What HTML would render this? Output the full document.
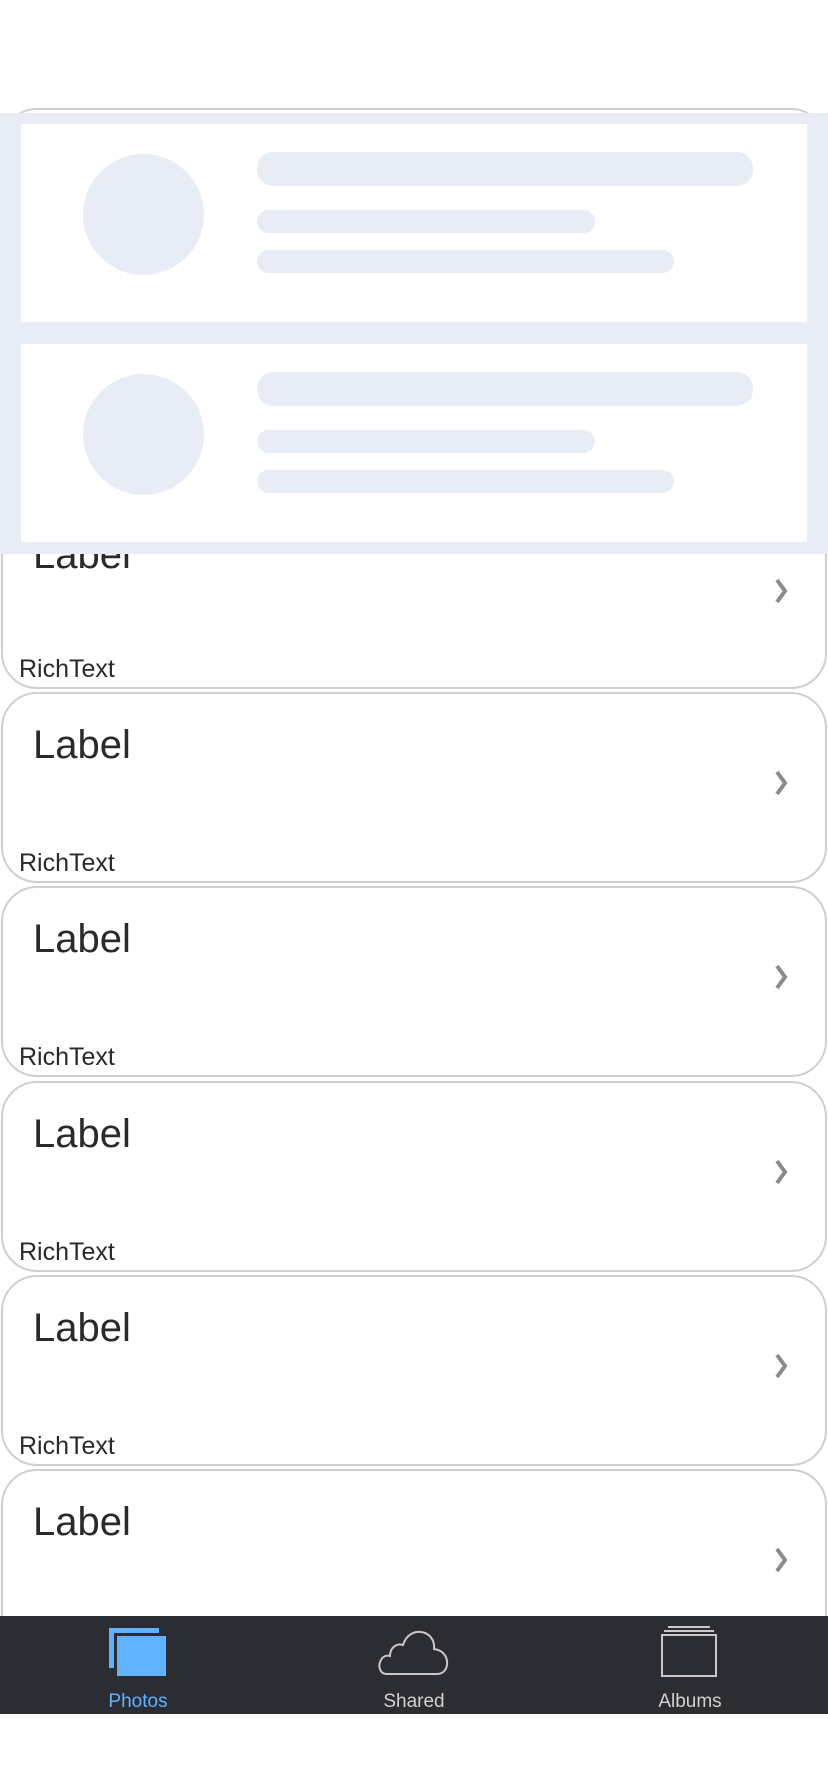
<!DOCTYPE html>
<html><head><meta charset="utf-8"><style>
*{margin:0;padding:0;box-sizing:border-box}
body{width:828px;height:1792px;background:#fff;position:relative;overflow:hidden;font-family:"Liberation Sans",sans-serif}
.card{position:absolute;left:1px;width:826px;border:2px solid #cfcfcf;border-radius:36px;background:#fff;overflow:hidden}
.lab{position:absolute;left:30px;font-size:40px;color:#2a2a2a;line-height:1}
.rt{position:absolute;left:16px;font-size:25px;color:#2a2a2a;line-height:1}
.chev{position:absolute;left:768px;width:20px;height:26px}
.ov{position:absolute;left:0;top:113px;width:828px;height:441px;background:#e8edf5}
.pn{position:absolute;left:21px;width:786px;height:198px;background:#fff}
.c{position:absolute;left:62px;top:30px;width:121px;height:121px;border-radius:50%;background:#e8edf5}
.b{position:absolute;left:236px;background:#e8edf5;border-radius:16px}
.tab{position:absolute;left:0;top:1616px;width:828px;height:98px;background:#2b2d33}
.tl{position:absolute;top:75px;font-size:19px;width:160px;text-align:center}
</style></head><body>

<div class="card" style="top:108px;height:581px">
 <div class="lab" style="top:425px">Label</div>
 <div class="chev" style="top:468px"><svg width="20" height="26"><path d="M6 2 L14 13 L6 24" stroke="#8a8a8a" stroke-width="4" fill="none"/></svg></div>
 <div class="rt" style="top:547px">RichText</div>
</div>
<div class="card" style="top:692px;height:191px">
 <div class="lab" style="top:31px">Label</div>
 <div class="chev" style="top:76px"><svg width="20" height="26"><path d="M6 2 L14 13 L6 24" stroke="#8a8a8a" stroke-width="4" fill="none"/></svg></div>
 <div class="rt" style="top:157px">RichText</div>
</div>
<div class="card" style="top:886px;height:191px">
 <div class="lab" style="top:31px">Label</div>
 <div class="chev" style="top:76px"><svg width="20" height="26"><path d="M6 2 L14 13 L6 24" stroke="#8a8a8a" stroke-width="4" fill="none"/></svg></div>
 <div class="rt" style="top:157px">RichText</div>
</div>
<div class="card" style="top:1081px;height:191px">
 <div class="lab" style="top:31px">Label</div>
 <div class="chev" style="top:76px"><svg width="20" height="26"><path d="M6 2 L14 13 L6 24" stroke="#8a8a8a" stroke-width="4" fill="none"/></svg></div>
 <div class="rt" style="top:157px">RichText</div>
</div>
<div class="card" style="top:1275px;height:191px">
 <div class="lab" style="top:31px">Label</div>
 <div class="chev" style="top:76px"><svg width="20" height="26"><path d="M6 2 L14 13 L6 24" stroke="#8a8a8a" stroke-width="4" fill="none"/></svg></div>
 <div class="rt" style="top:157px">RichText</div>
</div>
<div class="card" style="top:1469px;height:191px">
 <div class="lab" style="top:31px">Label</div>
 <div class="chev" style="top:76px"><svg width="20" height="26"><path d="M6 2 L14 13 L6 24" stroke="#8a8a8a" stroke-width="4" fill="none"/></svg></div>
</div>

<div class="ov">
 <div class="pn" style="top:11px">
  <div class="c"></div>
  <div class="b" style="top:28px;width:496px;height:34px"></div>
  <div class="b" style="top:86px;width:338px;height:23px"></div>
  <div class="b" style="top:126px;width:417px;height:23px"></div>
 </div>
 <div class="pn" style="top:231px">
  <div class="c"></div>
  <div class="b" style="top:28px;width:496px;height:34px"></div>
  <div class="b" style="top:86px;width:338px;height:23px"></div>
  <div class="b" style="top:126px;width:417px;height:23px"></div>
 </div>
</div>

<div class="tab">
 <svg style="position:absolute;left:108px;top:11px" width="60" height="50"><rect x="1" y="1" width="50" height="40" fill="#5fb3ff"/><rect x="6" y="6" width="52" height="42" fill="#2b2d33"/><rect x="9" y="9" width="49" height="40" fill="#5fb3ff"/></svg>
 <svg style="position:absolute;left:377px;top:13px" width="74" height="48"><path d="M10 45 C2 45 1 36 4 31 C6 27 10 26 13 27 C13 19 19 14 26 16 C29 6 37 2 44 3 C53 4 58 12 57 20 C66 21 71 28 70 36 C69 42 65 45 60 45 Z" stroke="#c8c8c8" stroke-width="2" fill="none"/></svg>
 <svg style="position:absolute;left:660px;top:9px" width="60" height="54"><rect x="8" y="1" width="42" height="2" fill="#c8c8c8"/><rect x="4" y="5" width="50" height="2" fill="#c8c8c8"/><rect x="2" y="10" width="54" height="41" stroke="#c8c8c8" stroke-width="2" fill="none"/></svg>
 <div class="tl" style="left:58px;color:#5fb3ff">Photos</div>
 <div class="tl" style="left:334px;color:#d0d0d0">Shared</div>
 <div class="tl" style="left:610px;color:#d0d0d0">Albums</div>
</div>
</body></html>
